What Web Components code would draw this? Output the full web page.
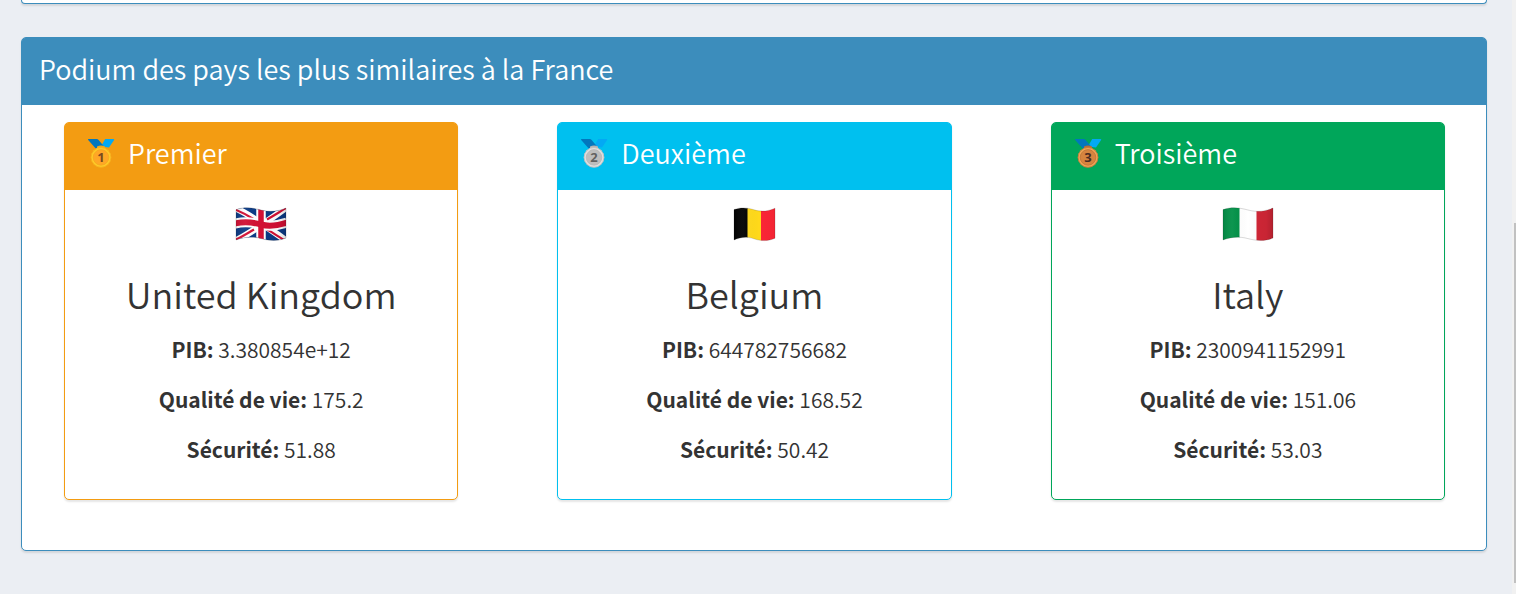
<!DOCTYPE html>
<html lang="fr">
<head>
<meta charset="utf-8">
<meta name="viewport" content="width=device-width, initial-scale=1">
<title>Podium des pays</title>
<style>
  body { margin: 0; background: #ebeef3; color: #333; font-family: "Noto Sans CJK SC", "Open Sans", sans-serif; }
</style>
</head>
<body>
<podium-page>
  <status-box tone="primary" tail></status-box>
  <status-box tone="primary">
    <span slot="title">Podium des pays les plus similaires à la France</span>
    <podium-row>
      <status-box tone="warning" inner>
        <medal-icon slot="icon" rank="1"></medal-icon>
        <span slot="title">Premier</span>
        <country-card name="United Kingdom" flag="gb" pib="3.380854e+12" quality="175.2" safety="51.88"></country-card>
      </status-box>
      <status-box tone="info" inner>
        <medal-icon slot="icon" rank="2"></medal-icon>
        <span slot="title">Deuxième</span>
        <country-card name="Belgium" flag="be" pib="644782756682" quality="168.52" safety="50.42"></country-card>
      </status-box>
      <status-box tone="success" inner>
        <medal-icon slot="icon" rank="3"></medal-icon>
        <span slot="title">Troisième</span>
        <country-card name="Italy" flag="it" pib="2300941152991" quality="151.06" safety="53.03"></country-card>
      </status-box>
    </podium-row>
  </status-box>
</podium-page>

<script>
class PodiumPage extends HTMLElement {
  constructor() {
    super();
    this.attachShadow({ mode: 'open' }).innerHTML = `
      <style>
        :host { display: block; min-height: 100vh; box-sizing: border-box; padding: 0 29px 43px 21px; }
        main { display: flex; flex-direction: column; gap: 33px; }
        .rail { position: fixed; top: 0; right: 0; bottom: 0; width: 4px; box-sizing: border-box;
          padding-left: 2px; background: #f1f1f1; display: grid; grid-template-rows: 223fr 360fr 11fr; }
        .thumb { grid-row: 2; background: #c1c1c1; }
      </style>
      <main><slot></slot></main>
      <div class="rail" aria-hidden="true"><div class="thumb"></div></div>`;
  }
}

class StatusBox extends HTMLElement {
  constructor() {
    super();
    const tail = this.hasAttribute('tail');
    this.attachShadow({ mode: 'open' }).innerHTML = `
      <style>
        :host { display: block; box-sizing: border-box; background: #fff; border: 1px solid var(--tone);
          border-radius: 5px; box-shadow: 0 2px 2px rgba(0,0,0,.1); min-width: 0; }
        :host([tone=primary]) { --tone: #3c8dbc; }
        :host([tone=warning]) { --tone: #f39c12; }
        :host([tone=info]) { --tone: #00c0ef; }
        :host([tone=success]) { --tone: #00a65a; }
        :host([tail]) { border-top: 0; border-radius: 0 0 5px 5px; height: 4px; }
        header { display: flex; align-items: center; gap: 13px; box-sizing: border-box; height: 67px;
          padding: 0 17px 6px; background: var(--tone); color: #fff; border-radius: 3px 3px 0 0; }
        :host([inner]) header { padding: 0 22px 8px; }
        h3 { margin: 0; font-size: 27px; line-height: 32px; font-weight: 350; }
      </style>
      ${tail ? '' : '<header><slot name="icon"></slot><h3><slot name="title"></slot></h3></header>'}
      <slot></slot>`;
  }
}

class PodiumRow extends HTMLElement {
  constructor() {
    super();
    this.attachShadow({ mode: 'open' }).innerHTML = `
      <style>
        :host { display: grid; grid-template-columns: repeat(3, minmax(0, 1fr)); gap: 99px; padding: 17px 41px 50px 42px; }
      </style>
      <slot></slot>`;
  }
}

class CountryCard extends HTMLElement {
  connectedCallback() {
    if (this.shadowRoot) return;
    const a = n => this.getAttribute(n);
    this.attachShadow({ mode: 'open' }).innerHTML = `
      <style>
        :host { display: block; padding: 17px 17px 35px; text-align: center; }
        flag-icon { margin: 0 auto 27px; }
        h2 { margin: 0 0 17px; font-size: 36px; line-height: 48px; font-weight: 350; }
        p { margin: 0 0 20px; font-size: 21px; line-height: 30px; font-weight: 350; }
        p:last-child { margin: 0; }
      </style>
      <flag-icon country="${a('flag')}"></flag-icon>
      <h2>${a('name')}</h2>
      <p><strong>PIB:</strong> ${a('pib')}</p>
      <p><strong>Qualité de vie:</strong> ${a('quality')}</p>
      <p><strong>Sécurité:</strong> ${a('safety')}</p>`;
  }
}

const MEDALS = {
  1: { rim: '#ffca28', edge: '#f2a81d', face: '#ffa726', ink: '#7a4a20' },
  2: { rim: '#e0e0e0', edge: '#b5b5b5', face: '#bdbdbd', ink: '#616161' },
  3: { rim: '#f0a556', edge: '#b96f35', face: '#d6843f', ink: '#4a2b22' }
};

class MedalIcon extends HTMLElement {
  connectedCallback() {
    if (this.shadowRoot) return;
    const rank = this.getAttribute('rank');
    const m = MEDALS[rank];
    this.attachShadow({ mode: 'open' }).innerHTML = `
      <style>
        :host { display: block; flex: none; width: 28px; height: 30px; }
        svg { display: block; }
        text { font: 700 13px "Open Sans", sans-serif; }
      </style>
      <svg width="28" height="30" viewBox="0 0 28 30" role="img" aria-label="Médaille ${rank}">
        <path d="M18.2 1h8.3q1.2 0 .6 1.1L22 9.5l-8-1z" fill="#03a9f4"/>
        <path d="M1.8 1h8q1 0 1.6.8L17.5 9l-9 1.2L1.2 2.1Q.5 1 1.8 1z" fill="#0277bd"/>
        <path d="M10 8.5q4-2 8 0v2h-8z" fill="${m.edge}"/>
        <circle cx="14" cy="19.4" r="10.2" fill="${m.rim}"/>
        <circle cx="14" cy="19.4" r="9.9" fill="none" stroke="${m.edge}" stroke-width=".7"/>
        <circle cx="14" cy="19.4" r="7.8" fill="${m.face}" stroke="${m.edge}" stroke-width=".7"/>
        <text x="14" y="24" text-anchor="middle" fill="${m.ink}">${rank}</text>
      </svg>`;
  }
}

/* Waving cloth outlines: a wide one (3:2) and a narrower one for Belgium. */
const WIDE = 'M1 2.6C10-.4 17 .6 26 3S43 4.400 51 1v30c-8 3.400-16 3-25 .6S9 30 1 33z';
const NARROW = 'M1 2.6C8 0 14 .6 21 2.800S35 4.400 42 1.200v30c-7 3.200-14 3-21 .6S8 30 1 33z';
const FLAGS = {
  gb: { w: 52, cloth: WIDE, art: `
    <path fill="#0b3a85" d="M0 0h52v35H0z"/>
    <path d="M0 1C15 7 37 24 52 34M0 34C16 26 37 11 52 0" stroke="#fff" stroke-width="6.500" fill="none"/>
    <path d="M0 2.500C9 6 14 9 20 13M31 21.500C38 26 45 31 52 34.500M0 33C7 30 13 26 19 22.500M32 12.500C40 8 46 4 52 .5" stroke="#d21034" stroke-width="2.200" fill="none"/>
    <path d="M0 16.500C9 14.500 17 15 26 17.500S43 18.500 52 15.500" stroke="#fff" stroke-width="10" fill="none"/>
    <path d="M26 0v35" stroke="#fff" stroke-width="9.500"/>
    <path d="M0 16.500C9 14.500 17 15 26 17.500S43 18.500 52 15.500" stroke="#d21034" stroke-width="6" fill="none"/>
    <path d="M26 0v35" stroke="#d21034" stroke-width="5.500"/>` },
  be: { w: 43, cloth: NARROW, art: `
    <path fill="#000" d="M0 0h15v35H0z"/><path fill="#ffd91a" d="M14.500 0H28v35H14.500z"/><path fill="#fb2636" d="M28 0h15v35H28z"/>` },
  it: { w: 52, cloth: WIDE, art: `
    <path fill="#009046" d="M0 0h18v35H0z"/><path fill="#fff" d="M17.500 0h17v35h-17z"/><path fill="#d12636" d="M34.500 0H52v35H34.500z"/>` }
};

class FlagIcon extends HTMLElement {
  connectedCallback() {
    if (this.shadowRoot) return;
    const f = FLAGS[this.getAttribute('country')];
    this.attachShadow({ mode: 'open' }).innerHTML = `
      <style>
        :host { display: block; width: fit-content; }
        svg { display: block; }
      </style>
      <svg width="${f.w}" height="35" viewBox="0 0 ${f.w} 35" aria-hidden="true">
        <defs>
          <clipPath id="cloth"><path d="${f.cloth}"/></clipPath>
          <linearGradient id="fold">
            <stop offset="0" stop-opacity=".1"/><stop offset=".2" stop-color="#fff" stop-opacity=".05"/>
            <stop offset=".5" stop-opacity="0"/><stop offset=".85" stop-opacity=".04"/><stop offset="1" stop-opacity=".16"/>
          </linearGradient>
        </defs>
        <g clip-path="url(#cloth)">${f.art}<path fill="url(#fold)" d="M0 0h52v35H0z"/></g>
        <path d="${f.cloth}" fill="none" stroke="#222" stroke-opacity=".22" stroke-width=".8"/>
      </svg>`;
  }
}

customElements.define('flag-icon', FlagIcon);
customElements.define('medal-icon', MedalIcon);
customElements.define('country-card', CountryCard);
customElements.define('podium-row', PodiumRow);
customElements.define('status-box', StatusBox);
customElements.define('podium-page', PodiumPage);
</script>
</body>
</html>
